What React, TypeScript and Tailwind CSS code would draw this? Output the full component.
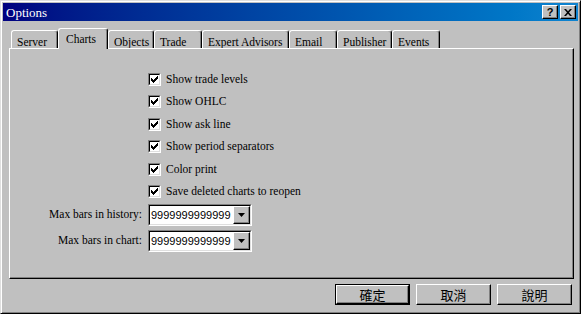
import React from "react";

const serif = { fontFamily: '"Liberation Serif", "Times New Roman", serif' };
const sans = { fontFamily: '"Liberation Sans", Arial, sans-serif' };
const cjk = { fontFamily: '"Noto Sans CJK TC", "Noto Sans CJK SC", sans-serif' };

const tabs = [
  { label: "Server", w: 47 },
  { label: "Charts", w: 50, active: true },
  { label: "Objects", w: 46 },
  { label: "Trade", w: 48 },
  { label: "Expert Advisors", w: 87 },
  { label: "Email", w: 48 },
  { label: "Publisher", w: 55 },
  { label: "Events", w: 48 },
];

const options = [
  "Show trade levels",
  "Show OHLC",
  "Show ask line",
  "Show period separators",
  "Color print",
  "Save deleted charts to reopen",
];

function Raised({ className = "", children }: { className?: string; children?: React.ReactNode }) {
  // 經典的凸起邊框
  return (
    <div
      className={`border border-t-white border-l-white border-r-black border-b-black bg-[#c0c0c0] shadow-[inset_-1px_-1px_0_#808080] ${className}`}
    >
      {children}
    </div>
  );
}

function Checkbox() {
  return (
    <div className="w-[13px] h-[13px] border border-t-[#808080] border-l-[#808080] border-r-white border-b-white">
      <div className="w-full h-full bg-white border border-t-black border-l-black border-r-[#dfdfdf] border-b-[#dfdfdf] flex items-center justify-center">
        <svg width="7" height="7" viewBox="0 0 7 7">
          <path d="M0 2h1v1h1v1h1V3h1V2h1V1h1V0h1v3h-1v1h-1v1h-1v1h-1v1H2V6H1V5H0z" fill="#000" />
        </svg>
      </div>
    </div>
  );
}

function Combo({ value }: { value: string }) {
  return (
    <div className="w-[104px] h-[22px] border border-t-[#808080] border-l-[#808080] border-r-white border-b-white">
      <div className="w-full h-full bg-white border border-t-black border-l-black border-r-[#dfdfdf] border-b-[#dfdfdf] flex items-center">
        <span className="flex-1 pl-[1px] text-[11px] leading-none text-black" style={sans}>
          {value}
        </span>
        <Raised className="w-[17px] h-[18px] flex items-center justify-center">
          <svg width="7" height="4" viewBox="0 0 7 4">
            <path d="M0 0h7L3.5 4z" fill="#000" />
          </svg>
        </Raised>
      </div>
    </div>
  );
}

function DlgButton({ label, isDefault }: { label: string; isDefault?: boolean }) {
  const inner = (
    <Raised className="w-full h-full flex items-center justify-center text-[13px] text-black">
      <span style={cjk}>{label}</span>
    </Raised>
  );
  return isDefault ? (
    <div className="w-[75px] h-[21px] border border-black">{inner}</div>
  ) : (
    <div className="w-[75px] h-[21px]">{inner}</div>
  );
}

export default function App() {
  return (
    <div className="w-[581px] h-[314px] bg-[#c0c0c0] border border-t-[#dfdfdf] border-l-[#dfdfdf] border-r-black border-b-black shadow-[inset_1px_1px_0_white,inset_-1px_-1px_0_#808080] flex flex-col select-none">
      {/* タイトルバー */}
      <div className="mx-[2px] mt-[2px] h-[18px] bg-gradient-to-r from-[#000080] to-[#1084d0] flex items-center pl-[3px] pr-[2px]">
        <span className="text-white text-[13px] leading-none flex-1" style={serif}>
          Options
        </span>
        <Raised className="w-[16px] h-[14px] flex items-center justify-center text-[11px] font-bold text-black leading-none">
          <span style={sans}>?</span>
        </Raised>
        <Raised className="ml-[2px] w-[16px] h-[14px] flex items-center justify-center">
          <svg width="8" height="7" viewBox="0 0 8 7">
            <path d="M0 0h2l2 2.3L6 0h2L5 3.5 8 7H6L4 4.7 2 7H0l3-3.5z" fill="#000" />
          </svg>
        </Raised>
      </div>

      {/* タブ */}
      <div className="ml-[8px] mt-[6px] w-[565px] relative">
        <div className="flex items-end pl-[2px] h-[21px] relative z-10">
          {tabs.map((t) =>
            t.active ? (
              <div
                key={t.label}
                style={{ width: t.w }}
                className="h-[21px] -mb-[1px] bg-[#c0c0c0] border-l border-t border-r border-l-white border-t-white border-r-black rounded-t-[3px] shadow-[inset_-1px_0_0_#808080] text-[11.5px] text-black pl-[7px] pt-[1px] whitespace-nowrap overflow-hidden"
              >
                <span style={serif}>{t.label}</span>
              </div>
            ) : (
              <div
                key={t.label}
                style={{ width: t.w }}
                className="h-[18px] bg-[#c0c0c0] border-l border-t border-r border-l-white border-t-white border-r-black rounded-t-[3px] shadow-[inset_-1px_0_0_#808080] text-[11.5px] text-black pl-[5px] pt-[2px] whitespace-nowrap overflow-hidden"
              >
                <span style={serif}>{t.label}</span>
              </div>
            )
          )}
        </div>

        {/* パネル */}
        <div className="h-[231px] border border-t-white border-l-white border-r-black border-b-black shadow-[inset_-1px_-1px_0_#808080] pt-[19px]" style={serif}>
          <div className="pl-[138px]">
            {options.map((o) => (
              <div key={o} className="h-[22.5px] flex items-center">
                <Checkbox />
                <span className="ml-[5px] text-[11.5px] text-black leading-none">{o}</span>
              </div>
            ))}
          </div>
          <div className="mt-[1px] flex flex-col gap-[4px]">
            <div className="flex items-center">
              <span className="w-[132px] text-right text-[11.5px] text-black">Max bars in history:</span>
              <div className="ml-[6px]">
                <Combo value="9999999999999" />
              </div>
            </div>
            <div className="flex items-center">
              <span className="w-[132px] text-right text-[11.5px] text-black">Max bars in chart:</span>
              <div className="ml-[6px]">
                <Combo value="9999999999999" />
              </div>
            </div>
          </div>
        </div>
      </div>

      {/* ボタン */}
      <div className="flex justify-end gap-[6px] mt-[5px] pr-[8px]">
        <DlgButton label="確定" isDefault />
        <DlgButton label="取消" />
        <DlgButton label="說明" />
      </div>
    </div>
  );
}
